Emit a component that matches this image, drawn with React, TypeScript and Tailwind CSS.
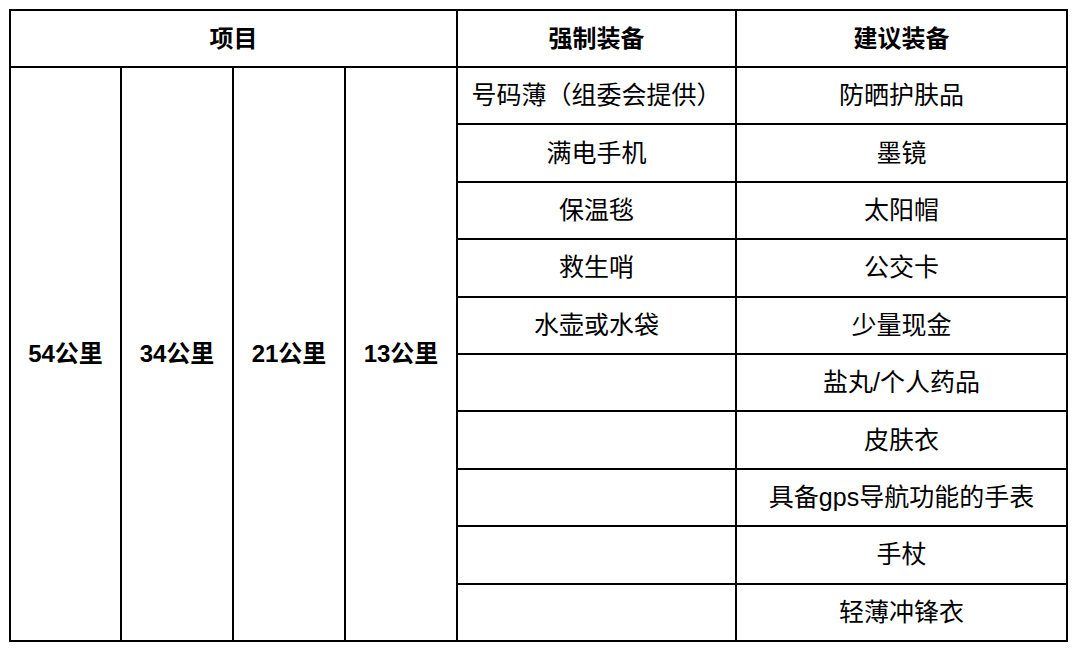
const required = ['号码薄（组委会提供）', '满电手机', '保温毯', '救生哨', '水壶或水袋', '', '', '', '', ''];

const suggested = [
  '防晒护肤品',
  '墨镜',
  '太阳帽',
  '公交卡',
  '少量现金',
  '盐丸/个人药品',
  '皮肤衣',
  '具备gps导航功能的手表',
  '手杖',
  '轻薄冲锋衣',
];

const distances = ['54公里', '34公里', '21公里', '13公里'];

export default function App() {
  return (
    <div
      className="w-[1076px] h-[654px] bg-white pl-[9px] pt-[9px] text-black"
      style={{ fontFamily: '"Liberation Sans", "Noto Sans CJK SC", sans-serif' }}
    >
      <table className="table-fixed border-collapse border-2 border-black w-[1057px] text-[25px] leading-none">
        <colgroup>
          <col className="w-[111px]" />
          <col className="w-[112px]" />
          <col className="w-[112px]" />
          <col className="w-[112px]" />
          <col className="w-[279px]" />
          <col className="w-[331px]" />
        </colgroup>
        <thead>
          <tr className="h-[57px]">
            <th colSpan={4} className="border-2 border-black font-bold text-[24px]">项目</th>
            <th className="border-2 border-black font-bold text-[24px]">强制装备</th>
            <th className="border-2 border-black font-bold text-[24px]">建议装备</th>
          </tr>
        </thead>
        <tbody>
          {suggested.map((item, i) => (
            <tr key={i} className="h-[57.4px]">
              {i === 0 &&
                distances.map((d) => (
                  <td key={d} rowSpan={10} className="border-2 border-black text-center font-bold text-[24px]">
                    {d}
                  </td>
                ))}
              <td className="border-2 border-black text-center">{required[i]}</td>
              <td className="border-2 border-black text-center">{item}</td>
            </tr>
          ))}
        </tbody>
      </table>
    </div>
  );
}
